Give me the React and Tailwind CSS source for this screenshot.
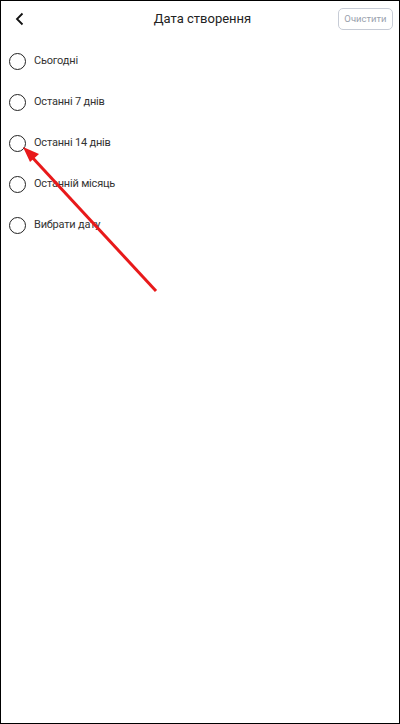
import React, { useState } from 'react';

const options = ['Сьогодні', 'Останні 7 днів', 'Останні 14 днів', 'Останній місяць', 'Вибрати дату'];

const App = () => {
  const [selected, setSelected] = useState(null);

  return (
    <div className="relative w-[400px] h-[724px] bg-white border border-black font-['Roboto',sans-serif] overflow-hidden">
      <div className="relative flex items-center justify-between h-[36px] pl-[12px] pr-[6px]">
        <button className="w-[14px] h-[14px] flex items-center justify-center">
          <svg width="10" height="14" viewBox="0 0 10 14" fill="none">
            <path d="M7.5 1.5L2 7l5.5 5.5" stroke="#111" strokeWidth="1.8" />
          </svg>
        </button>
        <h2 className="text-[13px] text-[#222] ml-[40px]">Дата створення</h2>
        <button className="h-[22px] w-[55px] border border-[#c7ccd6] rounded-[5px] text-[9.5px] text-[#9aa1ad]">Очистити</button>
      </div>

      <div className="flex flex-col pt-[4px]">
        {options.map((o, i) => (
          <label key={o} onClick={() => setSelected(i)} className="flex items-center h-[41px] pl-[8px] gap-[8px] cursor-pointer">
            <span className="w-[17px] h-[17px] rounded-full border-[1.5px] border-[#222] flex items-center justify-center">
              {selected === i && <span className="w-[9px] h-[9px] rounded-full bg-[#222]" />}
            </span>
            <span className="text-[11px] tracking-[-0.2px] text-[#333]">{o}</span>
          </label>
        ))}
      </div>

      <svg className="absolute left-0 top-0 pointer-events-none" width="400" height="724">
        <line x1="155" y1="290" x2="30" y2="155" stroke="#e8191a" strokeWidth="3" />
        <polygon points="22,146 38,153 29,161" fill="#e8191a" />
      </svg>
    </div>
  );
};

export default App;
